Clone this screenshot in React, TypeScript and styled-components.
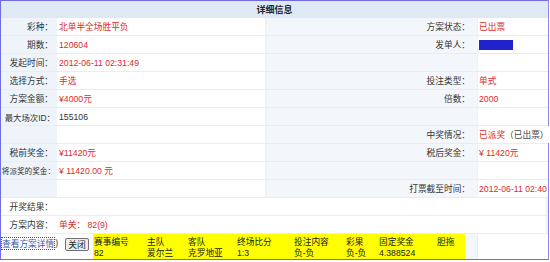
import React from "react";
import styled, { createGlobalStyle } from "styled-components";

const Global = createGlobalStyle`
  html, body { margin: 0; padding: 0; background: #ffffff; }
  body { font-family: "Liberation Sans", "Noto Sans CJK SC", sans-serif; font-size: 8.7px; color: #333; }
  * { box-sizing: border-box; }
`;

const Panel = styled.div`
  width: 549px;
  border: 1px solid #6e6ee0;
  border-right-color: #8a8ae6;
  background: #fff;
`;

const Header = styled.div`
  height: 17px;
  background: #dfe9f6;
  display: flex;
  align-items: center;
  justify-content: center;
  font-weight: bold;
  font-size: 9px;
  color: #222;
`;

const Row = styled.div`
  display: grid;
  grid-template-columns: 56px 210px 210px 1fr;
  height: 18px;
  border-bottom: 1px solid #e7edf5;
`;

const FullRow = styled.div`
  display: grid;
  grid-template-columns: 56px 1fr;
  height: 18px;
  border-bottom: 1px solid #e7edf5;
`;

const Label = styled.div<{ $plain?: boolean; $size?: number }>`
  background: ${(p) => (p.$plain ? "#ffffff" : "#eff4fb")};
  text-align: right;
  padding-right: ${(p) => (p.$size ? "2px" : "4px")};
  display: flex;
  align-items: center;
  justify-content: flex-end;
  white-space: nowrap;
  color: #333;
  font-size: ${(p) => (p.$size ? `${p.$size}px` : "inherit")};
`;

const Value = styled.div<{ $red?: boolean }>`
  background: #fff;
  padding-left: 2px;
  display: flex;
  align-items: center;
  white-space: nowrap;
  color: ${(p) => (p.$red ? "#dd2a2a" : "#333")};
  border-right: 2px solid #eef1f5;
`;

const RLabel = styled.div`
  background: #f3f7fc;
  display: flex;
  align-items: center;
  justify-content: flex-end;
  padding-right: 7px;
  white-space: nowrap;
  color: #333;
`;

const RValue = styled.div<{ $red?: boolean }>`
  background: #fff;
  padding-left: 1px;
  display: flex;
  align-items: center;
  white-space: nowrap;
  overflow: visible;
  color: ${(p) => (p.$red ? "#dd2a2a" : "#333")};
  border-left: 1px solid #eef2f7;
`;

const Gray = styled.span`
  color: #444;
`;

const Masked = styled.span`
  display: inline-block;
  width: 34px;
  height: 10px;
  background: #2222cc;
`;

const BottomRow = styled.div`
  display: grid;
  grid-template-columns: 266px 210px 1fr;
  height: 25px;
`;

const Actions = styled.div`
  display: flex;
  align-items: flex-start;
  min-width: 0;
  overflow: visible;
  position: relative;
  z-index: 1;
  white-space: nowrap;
  & > * { flex-shrink: 0; }
`;

const DetailLink = styled.a`
  margin-top: 3px;
  height: 13px;
  padding: 0 1px;
  display: flex;
  align-items: center;
  color: #3858a8;
  text-decoration: none;
  outline: 1px dotted #555;
  outline-offset: -1px;
`;

const Paren = styled.span`
  margin-top: 3px;
  line-height: 13px;
  color: #333;
`;

const CloseButton = styled.button`
  margin: 4px 0 0 7px;
  height: 13px;
  width: 24px;
  padding: 0;
  font: inherit;
  font-size: 8.7px;
  color: #222;
  background: #ececec;
  border: 1px solid #707070;
  border-radius: 2px;
  display: flex;
  align-items: center;
  justify-content: center;
`;

const Yellow = styled.div`
  margin-left: 4px;
  width: 372px;
  height: 25px;
  background: #ffff00;
  padding-top: 3px;
  display: grid;
  grid-template-columns: 53px 41px 49px 57px 52px 33px 58px 29px;
  grid-auto-rows: 11px;
  line-height: 11px;
  color: #222;
`;

const YCell = styled.div`
  padding-left: 1px;
  white-space: nowrap;
`;

const MidFill = styled.div`
  background: #f3f7fc;
`;

const EndFill = styled.div`
  background: #fff;
  border-left: 1px solid #e6ecf4;
`;

type Side = { label: string; value?: React.ReactNode; red?: boolean; size?: number };

const DataRow = ({ l, r }: { l: Side; r: Side }) => (
  <Row>
    <Label $size={l.size}>{l.label}</Label>
    <Value $red={l.red}>{l.value}</Value>
    <RLabel>{r.label}</RLabel>
    <RValue $red={r.red}>{r.value}</RValue>
  </Row>
);

const heads = ["赛事编号", "主队", "客队", "终场比分", "投注内容", "彩果", "固定奖金", "胆拖"];
const vals = ["82", "爱尔兰", "克罗地亚", "1:3", "负-负", "负-负", "4.388524", ""];

export default function App() {
  return (
    <>
      <Global />
      <Panel>
        <Header>详细信息</Header>
        <DataRow l={{ label: "彩种：", value: "北单半全场胜平负", red: true }} r={{ label: "方案状态：", value: "已出票", red: true }} />
        <DataRow l={{ label: "期数：", value: "120604", red: true }} r={{ label: "发单人：", value: <Masked /> }} />
        <DataRow l={{ label: "发起时间：", value: "2012-06-11 02:31:49", red: true }} r={{ label: "" }} />
        <DataRow l={{ label: "选择方式：", value: "手选", red: true }} r={{ label: "投注类型：", value: "单式", red: true }} />
        <DataRow l={{ label: "方案金额：", value: "¥4000元", red: true }} r={{ label: "倍数：", value: "2000", red: true }} />
        <DataRow l={{ label: "最大场次ID：", value: "155106", size: 8.4 }} r={{ label: "" }} />
        <DataRow
          l={{ label: "" }}
          r={{ label: "中奖情况：", value: <>已派奖<Gray>（已出票）</Gray></>, red: true }}
        />
        <DataRow l={{ label: "税前奖金：", value: "¥11420元", red: true }} r={{ label: "税后奖金：", value: "¥ 11420元", red: true }} />
        <DataRow l={{ label: "将派奖的奖金：", value: "¥ 11420.00 元", red: true, size: 7.6 }} r={{ label: "" }} />
        <DataRow l={{ label: "" }} r={{ label: "打票截至时间：", value: "2012-06-11 02:40", red: true }} />
        <FullRow>
          <Label $plain>开奖结果：</Label>
          <Value />
        </FullRow>
        <FullRow>
          <Label $plain>方案内容：</Label>
          <Value $red>单关：&nbsp;82(9)</Value>
        </FullRow>
        <BottomRow>
          <Actions>
            <DetailLink href="#">查看方案详情</DetailLink>
            <Paren>)</Paren>
            <CloseButton type="button">关闭</CloseButton>
            <Yellow>
              {heads.map((h, i) => (
                <YCell key={"h" + i}>{h}</YCell>
              ))}
              {vals.map((v, i) => (
                <YCell key={"v" + i}>{v}</YCell>
              ))}
            </Yellow>
          </Actions>
          <MidFill />
          <EndFill />
        </BottomRow>
      </Panel>
    </>
  );
}
